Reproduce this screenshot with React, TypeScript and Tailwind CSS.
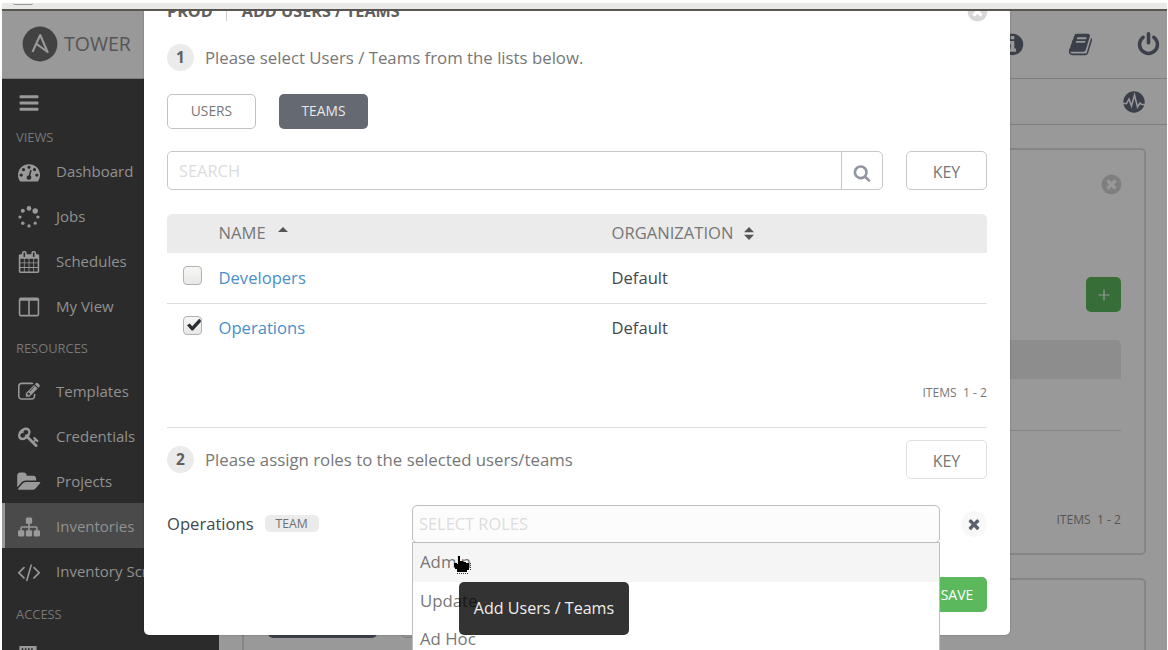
import { clsx } from "clsx";
import type { ReactNode } from "react";

type IconName = keyof typeof icons;

const icons = {
  bars: "M1664 1344v128q0 26-19 45t-45 19h-1408q-26 0-45-19t-19-45v-128q0-26 19-45t45-19h1408q26 0 45 19t19 45zm0-512v128q0 26-19 45t-45 19h-1408q-26 0-45-19t-19-45v-128q0-26 19-45t45-19h1408q26 0 45 19t19 45zm0-512v128q0 26-19 45t-45 19h-1408q-26 0-45-19t-19-45v-128q0-26 19-45t45-19h1408q26 0 45 19t19 45z",
  dashboard:
    "M384 1152q0-53-37.5-90.5t-90.5-37.5-90.5 37.5-37.5 90.5 37.5 90.5 90.5 37.5 90.5-37.5 37.5-90.5zm192-448q0-53-37.5-90.5t-90.5-37.5-90.5 37.5-37.5 90.5 37.5 90.5 90.5 37.5 90.5-37.5 37.5-90.5zm428 481l101-382q6-26-7.5-48.5t-38.5-29.5-48 6.5-30 39.5l-101 382q-60 5-107 43.5t-63 98.5q-20 77 20 146t117 89 146-20 89-117q16-60-6-117t-72-91zm660-33q0-53-37.5-90.5t-90.5-37.5-90.5 37.5-37.5 90.5 37.5 90.5 90.5 37.5 90.5-37.5 37.5-90.5zm-640-640q0-53-37.5-90.5t-90.5-37.5-90.5 37.5-37.5 90.5 37.5 90.5 90.5 37.5 90.5-37.5 37.5-90.5zm448 192q0-53-37.5-90.5t-90.5-37.5-90.5 37.5-37.5 90.5 37.5 90.5 90.5 37.5 90.5-37.5 37.5-90.5zm320 448q0 261-141 483-19 29-54 29h-1402q-35 0-54-29-141-221-141-483 0-182 71-348t191-286 286-191 348-71 348 71 286 191 191 286 71 348z",
  calendar:
    "M192 1664h288v-288h-288v288zm352 0h320v-288h-320v288zm-352-352h288v-320h-288v320zm352 0h320v-320h-320v320zm-352-384h288v-288h-288v288zm736 736h320v-288h-320v288zm-384-736h320v-288h-320v288zm768 736h288v-288h-288v288zm-384-352h320v-320h-320v320zm-352-864v-288q0-13-9.5-22.5t-22.5-9.5h-64q-13 0-22.5 9.5t-9.5 22.5v288q0 13 9.5 22.5t22.5 9.5h64q13 0 22.5-9.5t9.5-22.5zm736 864h288v-320h-288v320zm-384-384h320v-288h-320v288zm384 0h288v-288h-288v288zm32-480v-288q0-13-9.5-22.5t-22.5-9.5h-64q-13 0-22.5 9.5t-9.5 22.5v288q0 13 9.5 22.5t22.5 9.5h64q13 0 22.5-9.5t9.5-22.5zm384-64v1280q0 52-38 90t-90 38h-1408q-52 0-90-38t-38-90v-1280q0-52 38-90t90-38h128v-96q0-66 47-113t113-47h64q66 0 113 47t47 113v96h384v-96q0-66 47-113t113-47h64q66 0 113 47t47 113v96h128q52 0 90 38t38 90z",
  columns:
    "M224 1536h608v-1152h-640v1120q0 13 9.5 22.5t22.5 9.5zm1376-32v-1120h-640v1152h608q13 0 22.5-9.5t9.5-22.5zm128-1216v1216q0 66-47 113t-113 47h-1344q-66 0-113-47t-47-113v-1216q0-66 47-113t113-47h1344q66 0 113 47t47 113z",
  edit: "M888 1184l116-116-152-152-116 116v56h96v96h56zm440-720q-16-16-33 1l-350 350q-17 17-1 33t33-1l350-350q17-17 1-33zm80 594v190q0 119-84.5 203.5t-203.5 84.5h-832q-119 0-203.5-84.5t-84.5-203.5v-832q0-119 84.5-203.5t203.5-84.5h832q63 0 117 25 15 7 18 23 3 17-9 29l-49 49q-14 14-32 8-23-6-45-6h-832q-66 0-113 47t-47 113v832q0 66 47 113t113 47h832q66 0 113-47t47-113v-126q0-13 9-22l64-64q15-15 35-7t20 29zm-96-738l288 288-672 672h-288v-288zm444 132l-92 92-288-288 92-92q28-28 68-28t68 28l152 152q28 28 28 68t-28 68z",
  key: "M832 512q0-80-56-136t-136-56-136 56-56 136q0 42 19 83-41-19-83-19-80 0-136 56t-56 136 56 136 136 56 136-56 56-136q0-42-19-83 41 19 83 19 80 0 136-56t56-136zm851 704q0 17-49 66t-66 49q-9 0-28.5-16t-36.5-33-38.5-40-24.5-26l-96 96 220 220q28 28 28 68 0 42-39 81t-81 39q-40 0-68-28l-671-671q-176 131-365 131-163 0-265.5-102.5t-102.5-265.5q0-160 95-313t248-248 313-95q163 0 265.5 102.5t102.5 265.5q0 189-131 365l355 355 96-96q-3-3-26-24.5t-40-38.5-33-36.5-16-28.5q0-17 49-66t66-49q13 0 23 10 6 6 46 44.5t82 79.5 86.5 86 73 78 28.5 41z",
  folder:
    "M1815 952q0 31-31 66l-336 396q-43 51-120.5 86.5t-143.5 35.5h-1088q-34 0-60.5-13t-26.5-43q0-31 31-66l336-396q43-51 120.5-86.5t143.5-35.5h1088q34 0 60.5 13t26.5 43zm-343-344v160h-832q-94 0-197 47.5t-164 119.5l-337 396-5 6q0-4-.5-12.5t-.5-12.5v-960q0-92 66-158t158-66h320q92 0 158 66t66 158v32h544q92 0 158 66t66 158z",
  sitemap:
    "M1792 1248v320q0 40-28 68t-68 28h-320q-40 0-68-28t-28-68v-320q0-40 28-68t68-28h96v-192h-512v192h96q40 0 68 28t28 68v320q0 40-28 68t-68 28h-320q-40 0-68-28t-28-68v-320q0-40 28-68t68-28h96v-192h-512v192h96q40 0 68 28t28 68v320q0 40-28 68t-68 28h-320q-40 0-68-28t-28-68v-320q0-40 28-68t68-28h96v-192q0-52 38-90t90-38h512v-192h-96q-40 0-68-28t-28-68v-320q0-40 28-68t68-28h320q40 0 68 28t28 68v320q0 40-28 68t-68 28h-96v192h512q52 0 90 38t38 90v192h96q40 0 68 28t28 68z",
  code: "M553 1399l-50 50q-10 10-23 10t-23-10l-466-466q-10-10-10-23t10-23l466-466q10-10 23-10t23 10l50 50q10 10 10 23t-10 23l-393 393 393 393q10 10 10 23t-10 23zm591-1067l-373 1291q-4 13-15.5 19.5t-23.5 2.5l-62-17q-13-4-19.5-15.5t-2.5-24.5l373-1291q4-13 15.5-19.5t23.5-2.5l62 17q13 4 19.5 15.5t2.5 24.5zm657 651l-466 466q-10 10-23 10t-23-10l-50-50q-10-10-10-23t10-23l393-393-393-393q-10-10-10-23t10-23l50-50q10-10 23-10t23 10l466 466q10 10 10 23t-10 23z",
  building: "M256 0h1280q64 0 64 64v1728h-1408v-1728q0-64 64-64zm128 192v128h128v-128zm256 0v128h128v-128zm256 0v128h128v-128zm256 0v128h128v-128z",
  info: "M1152 1376v-160q0-14-9-23t-23-9h-96v-512q0-14-9-23t-23-9h-320q-14 0-23 9t-9 23v160q0 14 9 23t23 9h96v320h-96q-14 0-23 9t-9 23v160q0 14 9 23t23 9h448q14 0 23-9t9-23zm-128-896v-160q0-14-9-23t-23-9h-192q-14 0-23 9t-9 23v160q0 14 9 23t23 9h192q14 0 23-9t9-23zm640 416q0 209-103 385.5t-279.5 279.5-385.5 103-385.5-103-279.5-279.5-103-385.5 103-385.5 279.5-279.5 385.5-103 385.5 103 279.5 279.5 103 385.5z",
  book: "M1703 478q40 57 18 129l-275 906q-19 64-76.5 107.5t-122.5 43.5h-923q-77 0-148.5-53.5t-99.5-131.5q-24-67-2-127 0-4 3-27t4-37q1-8-3-21.5t-3-19.5q2-11 8-21t16.5-23.5 16.5-23.5q23-38 45-91.5t30-91.5q3-10 .5-30t-.5-28q3-11 17-28t17-23q21-36 42-92t25-90q1-9-2.5-32t.5-28q4-13 22-30.5t22-22.5q19-26 42.5-84.5t27.5-96.5q1-8-3-25.5t-2-26.5q2-8 9-18t18-23 17-21q8-12 16.5-30.5t15-35 16-36 19.5-32 26.5-23.5 36-11.5 47.5 5.5l-1 3q38-9 51-9h761q74 0 114 56t18 130l-274 906q-36 119-71.5 153.5t-128.5 34.5h-869q-27 0-38 15-11 16-1 43 24 70 144 70h923q29 0 56-15.5t35-41.5l300-987q7-22 5-57 38 15 59 43zm-1064 2q-4 13 2 22.5t20 9.5h608q13 0 25.5-9.5t16.5-22.5l21-64q4-13-2-22.5t-20-9.5h-608q-13 0-25.5 9.5t-16.5 22.5zm-83 256q-4 13 2 22.5t20 9.5h608q13 0 25.5-9.5t16.5-22.5l21-64q4-13-2-22.5t-20-9.5h-608q-13 0-25.5 9.5t-16.5 22.5z",
  power:
    "M1664 896q0 156-61 298t-164 245-245 164-298 61-298-61-245-164-164-245-61-298q0-182 80.5-343t226.5-270q43-32 95.5-25t83.5 50q32 42 24.5 94.5t-49.5 84.5q-98 74-151.5 181t-53.5 228q0 104 40.5 198.5t109.5 163.5 163.5 109.5 198.5 40.5 198.5-40.5 163.5-109.5 109.5-163.5 40.5-198.5q0-121-53.5-228t-151.5-181q-42-32-49.5-84.5t24.5-94.5q31-43 84-50t95 25q146 109 226.5 270t80.5 343zm-640-768v640q0 52-38 90t-90 38-90-38-38-90v-640q0-52 38-90t90-38 90 38 38 90z",
  search:
    "M1216 832q0-185-131.5-316.5t-316.5-131.5-316.5 131.5-131.5 316.5 131.5 316.5 316.5 131.5 316.5-131.5 131.5-316.5zm512 832q0 52-38 90t-90 38q-54 0-90-38l-343-342q-179 124-399 124-143 0-273.5-55.5t-225-150-150-225-55.5-273.5 55.5-273.5 150-225 225-150 273.5-55.5 273.5 55.5 225 150 150 225 55.5 273.5q0 220-124 399l343 343q37 37 37 90z",
  timesCircle:
    "M1277 1122q0-26-19-45l-181-181 181-181q19-19 19-45 0-27-19-46l-90-90q-19-19-46-19-26 0-45 19l-181 181-181-181q-19-19-45-19-27 0-46 19l-90 90q-19 19-19 46 0 26 19 45l181 181-181 181q-19 19-19 45 0 27 19 46l90 90q19 19 46 19 26 0 45-19l181-181 181 181q19 19 45 19 27 0 46-19l90-90q19-19 19-46zm387-226q0 209-103 385.5t-279.5 279.5-385.5 103-385.5-103-279.5-279.5-103-385.5 103-385.5 279.5-279.5 385.5-103 385.5 103 279.5 279.5 103 385.5z",
  times:
    "M1490 1322q0 40-28 68l-136 136q-28 28-68 28t-68-28l-294-294-294 294q-28 28-68 28t-68-28l-136-136q-28-28-28-68t28-68l294-294-294-294q-28-28-28-68t28-68l136-136q28-28 68-28t68 28l294 294 294-294q28-28 68-28t68 28l136 136q28 28 28 68t-28 68l-294 294 294 294q28 28 28 68z",
};

function Icon({ name, className }: { name: IconName; className?: string }) {
  return (
    <svg viewBox="0 0 1792 1792" fill="currentColor" className={clsx("shrink-0 overflow-visible", className)}>
      <path d={icons[name]} />
    </svg>
  );
}

function SpinnerIcon() {
  const dots = [
    [11, 2.4, 2.3],
    [17.2, 5, 2.7],
    [19.9, 11, 1.6],
    [17.2, 17.2, 1.6],
    [11, 19.9, 1.6],
    [4.8, 17.2, 1.7],
    [2, 11, 1.6],
    [4.8, 4.8, 2],
  ];
  return (
    <svg viewBox="0 0 22 22" fill="currentColor" className="size-[22px] shrink-0">
      {dots.map(([cx, cy, r]) => (
        <circle key={`${cx}-${cy}`} cx={cx} cy={cy} r={r} />
      ))}
    </svg>
  );
}

type NavEntry = { label: string; icon: IconName | "spinner"; active?: boolean };

const views: NavEntry[] = [
  { label: "Dashboard", icon: "dashboard" },
  { label: "Jobs", icon: "spinner" },
  { label: "Schedules", icon: "calendar" },
  { label: "My View", icon: "columns" },
];

const resources: NavEntry[] = [
  { label: "Templates", icon: "edit" },
  { label: "Credentials", icon: "key" },
  { label: "Projects", icon: "folder" },
  { label: "Inventories", icon: "sitemap", active: true },
  { label: "Inventory Scripts", icon: "code" },
];

const teams = [
  { name: "Developers", organization: "Default", checked: false },
  { name: "Operations", organization: "Default", checked: true },
];

function NavItem({ label, icon, active }: NavEntry) {
  return (
    <div
      className={clsx(
        "flex h-[45px] items-center border-l-[3px] pt-0.5 pl-3 text-[#999]",
        active ? "border-[#999] bg-[#4a4a4a]" : "border-transparent",
      )}
    >
      <div className="mr-4 flex w-[23px] justify-center">
        {icon === "spinner" ? <SpinnerIcon /> : <Icon name={icon} className="size-[22px]" />}
      </div>
      <span className="text-[15px] whitespace-nowrap text-[#919191]">{label}</span>
    </div>
  );
}

function NavHeading({ children, className }: { children: ReactNode; className: string }) {
  return <div className={clsx("flex items-center pl-3.5 text-[12.9px] text-[#777]", className)}>{children}</div>;
}

function Sidebar() {
  return (
    <nav className="w-[217px] shrink-0 bg-[#2b2b2b]">
      <div className="flex h-[45px] items-center pt-0.5 pl-4 text-[#999]">
        <Icon name="bars" className="size-[22px]" />
      </div>
      <NavHeading className="h-[24px] pt-[3px]">VIEWS</NavHeading>
      {views.map((item) => (
        <NavItem key={item.label} {...item} />
      ))}
      <NavHeading className="h-10 pt-0.5">RESOURCES</NavHeading>
      {resources.map((item) => (
        <NavItem key={item.label} {...item} />
      ))}
      <NavHeading className="h-10 pt-[3px]">ACCESS</NavHeading>
      <div className="pt-[13px] pl-[15px] text-[#999]">
        <Icon name="building" className="size-[22px]" />
      </div>
    </nav>
  );
}

function TopBar() {
  return (
    <header className="flex h-[68px] shrink-0 items-center justify-between border-b border-[#7c7c7c] pr-[6px] pb-px pl-5">
      <div className="flex items-center gap-[6px]">
        <svg viewBox="0 0 36 36" className="size-9">
          <circle cx="18" cy="18" r="17.4" fill="#424242" />
          <path d="M10.5 26 18.2 9 25.6 26 13.8 17.4" fill="none" stroke="#999" strokeWidth="2.1" strokeLinejoin="round" />
        </svg>
        <span className="text-[19.5px] text-[#555]">TOWER</span>
      </div>
      <div className="flex items-center gap-[43px] text-[#3b3f49]">
        <Icon name="info" className="size-[25px]" />
        <Icon name="book" className="size-[25px]" />
        <Icon name="power" className="size-[25px]" />
      </div>
    </header>
  );
}

function Inventory() {
  return (
    <main className="flex flex-1 flex-col text-[#555]">
      <div className="flex h-[46px] shrink-0 items-center justify-end border-b border-[#7c7c7c] pr-[22px]">
        <svg viewBox="0 0 22 22" className="size-[22px]">
          <circle cx="11" cy="11" r="10.7" fill="#3b3f49" />
          <path d="M0 12.5h3.5L6 8l2.5 7L11.5 4l3 12 2.5-4 1.5 1.5H22" fill="none" stroke="#999" strokeWidth="1.5" />
        </svg>
      </div>
      <section className="mt-[23px] mr-[21px] ml-[23px] flex h-[407px] shrink-0 flex-col rounded-[5px] border-2 border-[#858585] pr-[23px] pl-6">
        <Icon name="timesCircle" className="mt-[23px] -mr-[2px] size-[23px] self-end text-[#7f7f7f]" />
        <div className="mt-[81px] flex h-[35px] w-[35px] items-center justify-center self-end rounded-[5px] bg-[#376e37] text-[#999]">
          <svg viewBox="0 0 12 12" className="size-3">
            <path d="M6 .5v11M.5 6h11" stroke="currentColor" strokeWidth="1.2" />
          </svg>
        </div>
        <div className="mt-7 h-[39px] rounded-t-[5px] bg-[#8d8d8d]" />
        <div className="h-[52px] border-b border-[#858585]" />
        <div className="mt-[79px] text-right text-[12.1px] leading-5 whitespace-pre">ITEMS{"  "}1 - 2</div>
      </section>
      <section className="mt-[23px] mr-[21px] ml-[23px] flex h-[120px] shrink-0 gap-6 rounded-[5px] border-2 border-[#858585] px-6 pt-[23px]">
        <div className="h-[35px] w-[109px] rounded-[5px] bg-[#3b3f49]" />
        <div className="h-[35px] w-[109px] rounded-[5px] border-[1.5px] border-[#7c7c7c]" />
      </section>
    </main>
  );
}

function Step({ number, children }: { number: number; children: ReactNode }) {
  return (
    <div className="flex items-center gap-[11px]">
      <div className="flex size-[27px] items-center justify-center rounded-full bg-[#ebebeb] text-[15.5px] font-bold text-[#606060]">
        {number}
      </div>
      <p className="text-[16.8px] text-[#777]">{children}</p>
    </div>
  );
}

function KeyButton({ className }: { className: string }) {
  return (
    <button className={clsx("h-[39px] w-[81px] rounded-[5px] border pt-0.5 text-[16px] text-[#777]", className)}>KEY</button>
  );
}

function Checkbox({ checked }: { checked: boolean }) {
  return (
    <div className="relative size-[19px] rounded-[4px] border-[1.5px] border-[#b2b2ae] bg-linear-to-b from-[#f6f6f5] to-[#e8e8e7]">
      {checked && (
        <svg viewBox="0 0 19 19" className="absolute -top-px -left-px size-[19px]">
          <path d="M4 9.2 6.8 7.4 9.2 10.3 16.2 2.8 17.8 4.2V6L10 14.6H8.6Z" fill="#2b2f33" />
        </svg>
      )}
    </div>
  );
}

function TeamsTable() {
  return (
    <div className="mt-6 text-[16.6px]">
      <div className="flex h-[39px] items-center rounded-t-[5px] bg-[#ebebeb] pl-[51.5px] text-[#777]">
        <div className="flex w-[393px] items-center gap-3">
          NAME
          <svg viewBox="0 0 10 12" className="h-3 w-2.5">
            <path d="M0 5 5 0 10 5Z" fill="#555" />
          </svg>
        </div>
        <div className="flex items-center gap-2.5">
          ORGANIZATION
          <svg viewBox="0 0 10 13" className="h-[13px] w-2.5">
            <path d="M0 5.2 5 0 10 5.2ZM0 7.8 5 13 10 7.8Z" fill="#555" />
          </svg>
        </div>
      </div>
      {teams.map((team, i) => (
        <div
          key={team.name}
          className={clsx("flex items-center pl-4", i === 0 ? "h-[51px] border-b-[1.5px] border-[#dedede]" : "h-[49px]")}
        >
          <div className="mr-[16.5px] pb-1.5">
            <Checkbox checked={team.checked} />
          </div>
          <span className="w-[393px] text-[#4a8fca]">{team.name}</span>
          <span className="text-[#43484d]">{team.organization}</span>
        </div>
      ))}
    </div>
  );
}

function RolesSelect() {
  const roles = ["Admin", "Update", "Ad Hoc"];
  return (
    <div className="relative h-[38px] w-[528px] rounded-[5px] border border-[#bdbdbd] bg-[#fcfcfc] pl-1.5 text-[16.4px] leading-[36px] text-[#dcdcdc]">
      SELECT ROLES
      <div className="absolute top-[36px] -left-px z-10 h-[120px] w-[528px] border border-[#bdbdbd] bg-white text-[16.8px] text-[#777]">
        {roles.map((role, i) => (
          <div key={role} className={clsx("h-[38.5px] pl-[7px] leading-[38px]", i === 0 && "bg-[#f5f5f5]")}>
            {role}
          </div>
        ))}
      </div>
    </div>
  );
}

function AddTeamsModal() {
  return (
    <div className="absolute top-0 left-[142px] flex h-[624px] w-[866px] flex-col rounded-b-[5px] bg-white px-[23px] shadow-[0_0_2px_rgba(0,0,0,0.3)]">
      <div className="-mt-[13px] flex h-[26px] shrink-0 items-center text-[16.2px] font-bold text-[#606060]">
        <span>PROD</span>
        <span className="mr-[15px] ml-[13px] h-5 w-px bg-[#d0d0d0]" />
        <span>ADD USERS / TEAMS</span>
        <Icon name="timesCircle" className="-mr-[1.5px] ml-auto size-[23px] text-[#d7d7d7]" />
      </div>
      <div className="mt-5">
        <Step number={1}>Please select Users / Teams from the lists below.</Step>
      </div>
      <div className="mt-[23px] flex gap-[23px] text-[13.8px]">
        <button className="h-[35px] w-[89px] rounded-[5px] border border-[#c2c2c2] text-[#777]">USERS</button>
        <button className="h-[35px] w-[89px] rounded-[5px] bg-[#646972] text-[#e8e8e8]">TEAMS</button>
      </div>
      <div className="mt-[22px] flex justify-between">
        <div className="flex h-[39px] w-[716px] rounded-[5px] border border-[#c8c8c8]">
          <div className="flex-1 pl-[11px] text-[16.4px] leading-[37px] text-[#dcdcdc]">SEARCH</div>
          <div className="flex w-[41px] items-center justify-center border-l border-[#c8c8c8] pt-1">
            <Icon name="search" className="size-[18px] text-[#9196a0]" />
          </div>
        </div>
        <KeyButton className="border-[#c8c8c8]" />
      </div>
      <TeamsTable />
      <div className="mt-[30px] text-right text-[12.1px] leading-5 whitespace-pre text-[#777]">ITEMS{"  "}1 - 2</div>
      <div className="mt-[24px] border-t border-[#dedede]" />
      <div className="mt-[12px] flex items-center justify-between">
        <Step number={2}>Please assign roles to the selected users/teams</Step>
        <KeyButton className="border-[#e0e0e0]" />
      </div>
      <div className="mt-[26px] flex items-center">
        <div className="flex w-[245px] items-center gap-[11px]">
          <span className="text-[16.6px] text-[#43484d]">Operations</span>
          <span className="h-[17px] w-[54px] rounded-[5px] bg-[#ebebeb] text-center text-[12.2px] leading-[18px] text-[#707070]">TEAM</span>
        </div>
        <RolesSelect />
        <div className="ml-auto flex size-[26px] items-center justify-center rounded-full bg-[#f8f8f8]">
          <Icon name="times" className="size-4 text-[#5c626d]" />
        </div>
      </div>
      <button className="mt-[34px] h-[35px] w-[60px] shrink-0 self-end rounded-[5px] bg-[#5cb85c] text-[14px] text-white">SAVE</button>
    </div>
  );
}

function HandCursor() {
  return (
    <svg viewBox="0 0 20 20" shapeRendering="crispEdges" className="absolute top-[544px] left-[450px] z-20 h-5 w-5">
      <path d="M6 1h2v5h3v1h3v1h3v7h-2v2H5v-3H3v-2H2v-4h3v1h1Z" fill="#000" />
      <path d="M18.500 8v8M5 18.500h11" stroke="#333" strokeDasharray="1 1" />
    </svg>
  );
}

export default function App() {
  return (
    <div className="flex h-[650px] w-[1168px] flex-col overflow-hidden bg-white pt-[3px] pr-px pl-0.5 font-['Open_Sans',sans-serif]">
      <div className="h-2 shrink-0 border-b-2 border-[#595551] bg-[#e9e9e7]">
        <div className="ml-[11px] h-[2px] w-5 rounded-b-full border-b border-[#999]" />
      </div>
      <div className="relative flex min-h-0 flex-1 flex-col overflow-hidden bg-[#999]">
        <TopBar />
        <div className="flex min-h-0 flex-1">
          <Sidebar />
          <Inventory />
        </div>
        <AddTeamsModal />
        <HandCursor />
        <div className="absolute top-[571px] left-[457px] z-20 h-[53px] w-[170px] rounded-[5px] bg-black/80 text-center text-[16.1px] leading-[52px] whitespace-nowrap text-[#eee]">
          Add Users / Teams
        </div>
      </div>
    </div>
  );
}
